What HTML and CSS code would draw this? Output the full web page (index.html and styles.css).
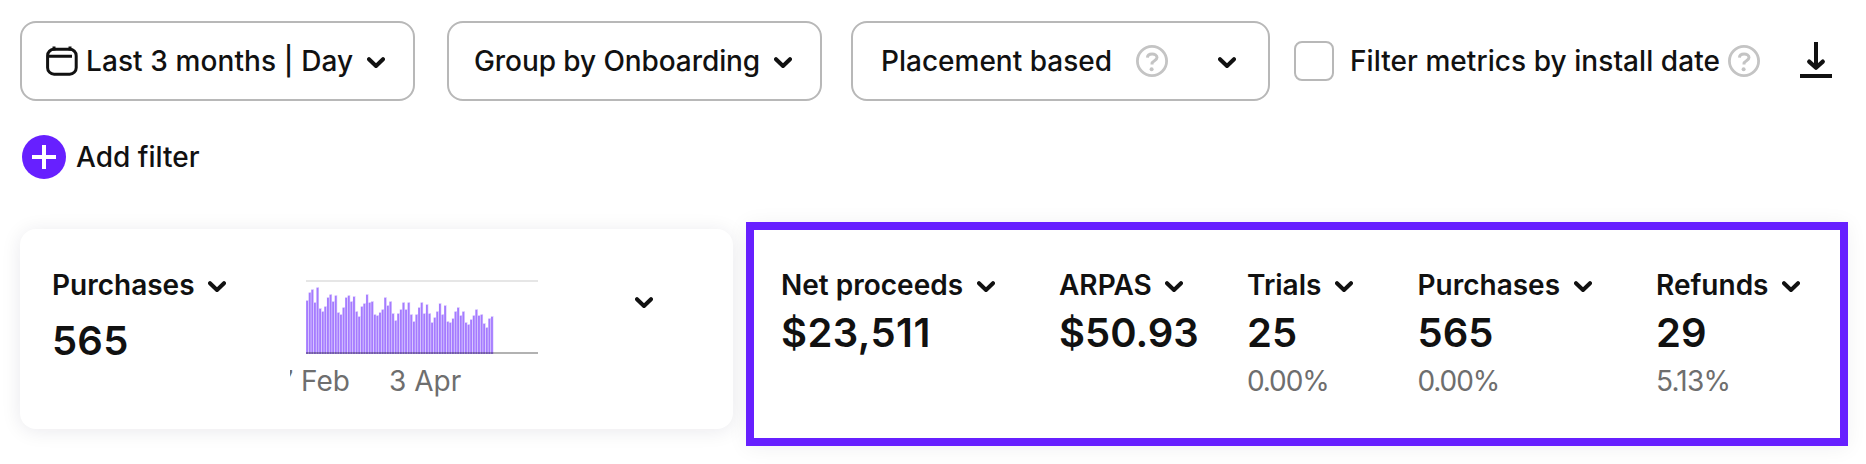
FILE: index.html
```html
<!DOCTYPE html>
<html lang="en">
<head>
<meta charset="utf-8">
<title>Metrics</title>
<link rel="stylesheet" href="styles.css">
</head>
<body>
<svg class="defs" aria-hidden="true">
  <symbol id="chevron" viewBox="0 0 18 12"><path d="M2 2.2 9 9 16 2.2" fill="none" stroke="currentColor" stroke-width="4" stroke-linecap="round" stroke-linejoin="round"/></symbol>
  <symbol id="help" viewBox="0 0 32 32"><g fill="none" stroke="currentColor"><circle cx="16" cy="16" r="14.6" stroke-width="2.8"/><path d="M11.4 12.6c.2-2.4 2.1-3.7 4.7-3.7s4.9 1.4 4.9 3.7c0 3.3-5 3-5 6.2v.8" stroke-width="3"/></g><circle cx="15.6" cy="24.2" r="2" fill="currentColor"/></symbol>
</svg>
<div class="toolbar">
  <button class="select select-date">
    <svg class="calendar" viewBox="0 0 32 30"><g fill="none" stroke="currentColor" stroke-width="3"><rect x="1.6" y="3.2" width="28.6" height="25" rx="6.500"/><path d="M3 10.3h23M8 0.4v4M24 .4v4"/></g></svg>
    <span>Last 3 months | Day</span>
    <svg class="chevron"><use href="#chevron"/></svg>
  </button>
  <button class="select select-group"><span>Group by Onboarding</span><svg class="chevron"><use href="#chevron"/></svg></button>
  <button class="select select-placement"><span>Placement based</span><svg class="help"><use href="#help"/></svg><svg class="chevron"><use href="#chevron"/></svg></button>
  <label class="install"><span class="checkbox"></span><span class="install-text">Filter metrics by install date</span><svg class="help"><use href="#help"/></svg></label>
  <svg class="download" viewBox="0 0 32 36"><path d="M16 0v25" stroke="currentColor" stroke-width="4"/><path d="M9.2 19.6 16 25.8l6.800-6.200" fill="none" stroke="currentColor" stroke-width="4.200" stroke-linecap="round" stroke-linejoin="round"/><path d="M0 32h32v4H0z" fill="currentColor"/></svg>
</div>
<div class="filters"><svg class="plus" viewBox="0 0 44 44"><circle cx="22" cy="22" r="22" fill="#6720ff"/><path d="M10 22h24M22 10v24" stroke="#fff" stroke-width="4"/></svg><span>Add filter</span></div>
<div class="cards">
  <section class="card">
    <div class="metric metric-main"><h2>Purchases<svg class="chevron"><use href="#chevron"/></svg></h2><strong>565</strong></div>
    <div class="chart">
      <svg class="plot" viewBox="0 0 232 74"><path d="M0 1h232" stroke="#e6e6e6" stroke-width="2"/><g id="bars"></g><path d="M0 73h232" stroke="#000" stroke-opacity=".3" stroke-width="2"/></svg>
      <div class="axis"><span class="tick-feb"><span>17 Feb</span></span><span>3 Apr</span></div>
    </div>
    <svg class="chevron expand"><use href="#chevron"/></svg>
  </section>
  <section class="highlight">
    <div class="metric proceeds"><h2>Net proceeds<svg class="chevron"><use href="#chevron"/></svg></h2><strong>$23,511</strong></div>
    <div class="metric arpas"><h2>ARPAS<svg class="chevron"><use href="#chevron"/></svg></h2><strong>$50.93</strong></div>
    <div class="metric trials"><h2>Trials<svg class="chevron"><use href="#chevron"/></svg></h2><strong>25</strong><small>0.00%</small></div>
    <div class="metric purchases"><h2>Purchases<svg class="chevron"><use href="#chevron"/></svg></h2><strong>565</strong><small>0.00%</small></div>
    <div class="metric refunds"><h2>Refunds<svg class="chevron"><use href="#chevron"/></svg></h2><strong>29</strong><small>5.13%</small></div>
  </section>
</div>
<script src="chart.js"></script>
</body>
</html>
```
FILE: styles.css
```css
* { box-sizing: border-box; }
body { margin: 0; width: 1866px; height: 464px; overflow: hidden; background: #fff; color: #111; font: 500 28px/40px Inter, sans-serif; }
svg { display: block; flex: none; }
.defs { position: absolute; width: 0; height: 0; }
.toolbar { display: flex; align-items: center; height: 80px; margin: 21px 0 0 20px; white-space: nowrap; }
.select { display: flex; align-items: center; height: 80px; border: 2px solid #b8b8b8; border-radius: 16px; background: #fff; color: inherit; font: inherit; padding: 0; }
.select-date { width: 395px; padding-left: 24px; margin-right: 32px; letter-spacing: .1px; }
.select-group { width: 375px; padding-left: 25px; margin-right: 29px; letter-spacing: -.08px; }
.select-placement { width: 419px; padding-left: 28px; margin-right: 24px; }
.calendar { width: 32px; height: 30px; margin-right: 8px; }
.chevron { width: 18px; height: 12px; }
.select .chevron { margin: 3px 0 0 14px; }
.select-date .chevron { margin-left: 13.5px; }
.help { width: 32px; height: 32px; color: #c4c4c4; }
.select-placement .help { margin-left: 24px; }
.select-placement .chevron { margin-left: 50px; }
.install { display: flex; align-items: center; }
.checkbox { width: 40px; height: 40px; border: 2px solid #b8b8b8; border-radius: 8px; margin-right: 16px; }
.install-text { width: 370px; margin-right: 8px; letter-spacing: .06px; }
.download { width: 32px; height: 36px; margin: -4px 0 0 40px; position: relative; top: 0; }
.toolbar .download { margin-top: -3px; }
.filters { display: flex; align-items: center; height: 44px; margin: 34px 0 0 22px; }
.plus { width: 44px; height: 44px; margin-right: 10px; }
.cards { display: flex; height: 224px; margin: 43px 0 0 20px; }
.card { display: flex; width: 713px; height: 200px; margin: 7px 13px 0 0; border-radius: 16px; box-shadow: 0 2px 20px rgba(18, 15, 50, .09); padding: 36px 0 0 32px; }
.metric h2 { display: flex; align-items: center; margin: 0; font: 600 28px/40px Inter, sans-serif; white-space: nowrap; }
.metric h2 .chevron { margin: 3px 0 0 13.5px; }
.metric strong { display: block; font: 600 40px/56px Inter, sans-serif; }
.metric small { display: block; font: 400 28px/40px Inter, sans-serif; letter-spacing: -1.1px; color: #6e6e6e; }
.metric.refunds small { letter-spacing: -.8px; }
.metric-main { width: 238px; }
.metric-main strong { margin-top: 8px; letter-spacing: .2px; }
.chart { width: 248px; padding-top: 15px; }
.plot { width: 232px; height: 74px; margin-left: 16px; }
.axis { display: flex; gap: 39px; margin-top: 7px; font-weight: 400; color: #6e6e6e; white-space: nowrap; }
.tick-feb { display: flex; justify-content: flex-end; width: 60px; overflow: hidden; }
.expand { margin: 32px 0 0 97px; }
.highlight { display: flex; width: 1102px; height: 224px; border: 8px solid #6720ff; padding: 35px 0 0 27px; box-shadow: 0 2px 20px rgba(18, 15, 50, .06); }
.proceeds { width: 278px; }
.proceeds h2 .chevron { margin-left: 14px; }
.proceeds strong { letter-spacing: .4px; }
.arpas { width: 188px; }
.trials { width: 170.5px; }
.purchases { width: 238.5px; }
```
FILE: chart.js
```js
const values = [53,61,64,51,66,45,42,47,56,59,52,58,41,39,46,56,58,52,57,42,37,47,50,59,51,52,39,38,41,44,56,48,52,40,33,40,44,51,44,51,39,32,39,46,51,40,49,40,31,36,42,50,39,48,32,31,35,42,46,38,42,31,29,34,38,44,38,39,30,26,35,37];
const bars = document.getElementById('bars');
function addBar(x, width, value, fill) {
  const bar = document.createElementNS('http://www.w3.org/2000/svg', 'rect');
  bar.setAttribute('x', x);
  bar.setAttribute('y', 74 - value);
  bar.setAttribute('width', width);
  bar.setAttribute('height', value);
  bar.setAttribute('fill', fill);
  bars.appendChild(bar);
}
// Each day is a pale outline with a solid core.
values.forEach((value, i) => {
  addBar(i * 2.604, 2.604, value + 1, '#dccdff');
  addBar(i * 2.604 + 0.2, 1.8, value, '#a57bff');
});
```
